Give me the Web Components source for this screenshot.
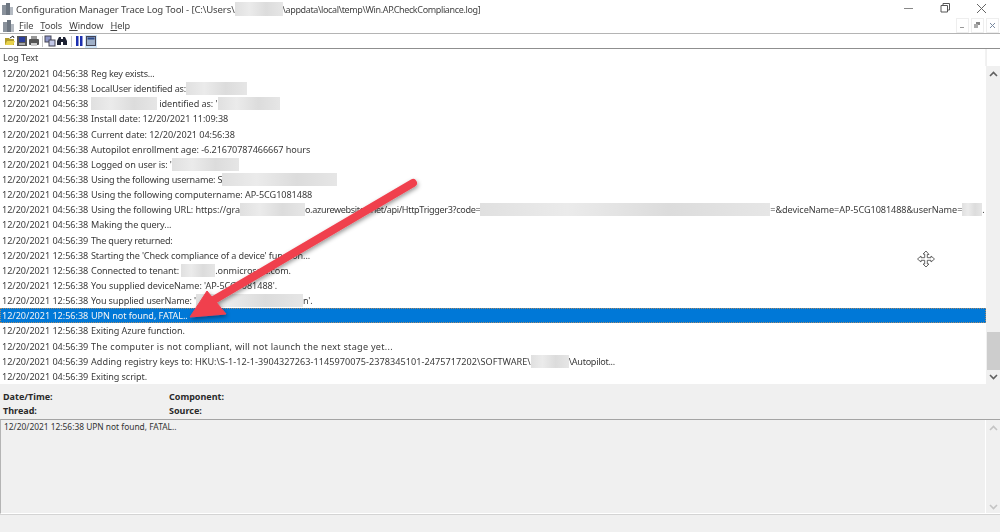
<!DOCTYPE html>
<html>
<head>
<meta charset="utf-8">
<title>Configuration Manager Trace Log Tool</title>
<style>
  html, body { margin: 0; height: 100%; background: #fff; overflow: hidden; }
  body { font-family: "Noto Sans", "Open Sans", sans-serif; color: #333; }
</style>
</head>
<body>
<log-window>
  <title-bar>Configuration Manager Trace Log Tool - [C:\Users\<hidden-text w="48" h="14"></hidden-text><span style="font-size:9px;letter-spacing:-.36px">\appdata\local\temp\Win.AP.CheckCompliance.log]</span></title-bar>
  <menu-bar></menu-bar>
  <tool-bar></tool-bar>
  <log-list>
    <log-row time="12/20/2021 04:56:38" style="--ls:-.2px">Reg key exists...</log-row>
    <log-row time="12/20/2021 04:56:38" style="--ls:-.17px">LocalUser identified as:<hidden-text w="61"></hidden-text></log-row>
    <log-row time="12/20/2021 04:56:38"><hidden-text w="66"></hidden-text> identified as: '<hidden-text w="62"></hidden-text></log-row>
    <log-row time="12/20/2021 04:56:38">Install date: 12/20/2021 11:09:38</log-row>
    <log-row time="12/20/2021 04:56:38">Current date: 12/20/2021 04:56:38</log-row>
    <log-row time="12/20/2021 04:56:38">Autopilot enrollment age: -6.21670787466667 hours</log-row>
    <log-row time="12/20/2021 04:56:38" style="--ls:-.1px">Logged on user is: '<hidden-text w="67"></hidden-text></log-row>
    <log-row time="12/20/2021 04:56:38" style="--ls:-.22px">Using the following username: S<hidden-text w="115"></hidden-text></log-row>
    <log-row time="12/20/2021 04:56:38">Using the following computername: AP-5CG1081488</log-row>
    <log-row time="12/20/2021 04:56:38" style="--ls:-.1px">Using the following URL: https://gra<hidden-text w="65"></hidden-text><span style="letter-spacing:-.34px">o.azurewebsites.net/api/HttpTrigger3?code=</span><hidden-text w="290"></hidden-text><span style="letter-spacing:-.06px">=&amp;deviceName=AP-5CG1081488&amp;userName=</span><hidden-text w="20"></hidden-text>.</log-row>
    <log-row time="12/20/2021 04:56:38" style="--ls:-.1px">Making the query...</log-row>
    <log-row time="12/20/2021 04:56:39" style="--ls:-.2px">The query returned:</log-row>
    <log-row time="12/20/2021 12:56:38" style="--ls:-.14px">Starting the 'Check compliance of a device' function...</log-row>
    <log-row time="12/20/2021 12:56:38" style="--ls:-.1px">Connected to tenant: <hidden-text w="34"></hidden-text>.onmicrosoft.com.</log-row>
    <log-row time="12/20/2021 12:56:38">You supplied deviceName: 'AP-5CG1081488'.</log-row>
    <log-row time="12/20/2021 12:56:38" style="--ls:-.15px">You supplied userName: '<hidden-text w="107"></hidden-text>n'.</log-row>
    <log-row time="12/20/2021 12:56:38" selected>UPN not found, FATAL..</log-row>
    <log-row time="12/20/2021 12:56:38" style="--ls:-.1px">Exiting Azure function.</log-row>
    <log-row time="12/20/2021 04:56:39" style="--ls:.27px">The computer is not compliant, will not launch the next stage yet...</log-row>
    <log-row time="12/20/2021 04:56:39" style="--ls:.05px">Adding registry keys to: HKU:\S-1-12-1-3904327263-1145970075-2378345101-2475717202\SOFTWARE\<hidden-text w="38"></hidden-text><span style="letter-spacing:-.3px">\Autopilot...</span></log-row>
    <log-row time="12/20/2021 04:56:39" style="--ls:-.1px">Exiting script.</log-row>
  </log-list>
  <detail-pane>12/20/2021 12:56:38 UPN not found, FATAL..</detail-pane>
  <callout-arrow></callout-arrow>
</log-window>

<script>
const base = `:host { box-sizing: border-box; } * { box-sizing: border-box; }`;

class LogWindow extends HTMLElement {
  connectedCallback() {
    this.attachShadow({ mode: 'open' });
    this.shadowRoot.innerHTML = `
      <style>
        ${base}
        :host {
          display: flex;
          flex-direction: column;
          position: relative;
          width: 1000px;
          height: 532px;
          overflow: hidden;
          filter: blur(0.42px);
        }
      </style>
      <slot></slot>
    `;
  }
}

class HiddenText extends HTMLElement {
  connectedCallback() {
    const w = this.getAttribute('w');
    const h = this.getAttribute('h') || 13;
    this.attachShadow({ mode: 'open' });
    this.shadowRoot.innerHTML = `
      <style>
        :host {
          display: inline-block;
          width: ${w}px;
          height: ${h}px;
          vertical-align: middle;
          background: linear-gradient(90deg, #e0e0e0, #ebebeb 30%, #dcdcdc 65%, #e6e6e6);
          filter: blur(0.6px);
        }
      </style>
    `;
  }
}

class TitleBar extends HTMLElement {
  connectedCallback() {
    this.attachShadow({ mode: 'open' });
    this.shadowRoot.innerHTML = `
      <style>
        ${base}
        :host {
          display: flex;
          align-items: center;
          height: 18px;
          padding-left: 1px;
          font-size: 9.6px;
          letter-spacing: -0.13px;
          color: #444;
          white-space: nowrap;
        }
        .app { width: 13px; height: 14px; margin-right: 2px; flex: none; }
        .text { flex: 1; display: flex; align-items: center; }
        .text span { display: inline-flex; align-items: center; white-space: pre; }
        .ctl { display: flex; align-items: center; flex: none; }
        .ctl svg { display: block; }
      </style>
      <svg class="app" viewBox="0 0 13 14">
        <rect x="1" y="3" width="4" height="10" fill="#8a929c"/>
        <rect x="5" y="1" width="4" height="12" fill="#6d7681"/>
        <rect x="9" y="5" width="3" height="8" fill="#b4bac2"/>
      </svg>
      <div class="text"><span><slot></slot></span></div>
      <div class="ctl">
        <svg width="100" height="18" viewBox="0 0 100 18" fill="none" stroke="#555" stroke-width="1">
          <path d="M4 8.500h9" stroke="#888"/>
          <path d="M41 5.500h6.500v6.500h-6.500zM43 5.500v-2h6.500v6.500h-2"/>
          <path d="M77 4l9 9M86 4l-9 9" stroke="#666"/>
        </svg>
      </div>
    `;
  }
}

class MenuBar extends HTMLElement {
  connectedCallback() {
    this.attachShadow({ mode: 'open' });
    this.shadowRoot.innerHTML = `
      <style>
        ${base}
        :host {
          display: flex;
          align-items: center;
          height: 16px;
          padding-left: 2px;
          font-size: 9.2px;
          letter-spacing: -0.1px;
          color: #444;
          border-bottom: 1px solid #b4b4b4;
        }
        .app { width: 13px; height: 14px; margin-right: 4px; flex: none; }
        span { margin-right: 7px; }
        u { text-decoration-thickness: 1px; text-underline-offset: 1px; }
        .mdi { margin-left: auto; display: flex; gap: 2px; padding-right: 1px; align-self: flex-start; }
        .mdi div {
          width: 13px;
          height: 15px;
          background: #fff;
          border: 1px solid #eee;
          display: flex;
          align-items: center;
          justify-content: center;
        }
      </style>
      <svg class="app" viewBox="0 0 13 14">
        <rect x="1" y="3" width="4" height="10" fill="#8a929c"/>
        <rect x="5" y="1" width="4" height="12" fill="#6d7681"/>
        <rect x="9" y="5" width="3" height="8" fill="#b4bac2"/>
      </svg>
      <span><u>F</u>ile</span><span><u>T</u>ools</span><span><u>W</u>indow</span><span><u>H</u>elp</span>
      <div class="mdi">
        <div><svg width="7" height="7"><rect x="1" y="5" width="4" height="1" fill="#999"/></svg></div>
        <div><svg width="7" height="7"><rect x="2" y="0" width="4" height="3" fill="#888"/><rect x="0" y="2" width="4" height="4" fill="#aaa"/></svg></div>
        <div><svg width="7" height="7" fill="none" stroke="#7a8aa0"><path d="M1 1l5 5M6 1l-5 5"/></svg></div>
      </div>
    `;
  }
}

class ToolBar extends HTMLElement {
  connectedCallback() {
    this.attachShadow({ mode: 'open' });
    this.shadowRoot.innerHTML = `
      <style>
        ${base}
        :host {
          display: flex;
          align-items: center;
          height: 15px;
          padding-left: 4px;
          border-bottom: 1px solid #8f8f8f;
        }
        svg { display: block; flex: none; width: 12px; height: 12px; }
        .sep { width: 1px; height: 11px; background: #c4c4c4; margin: 0 1px 0 2px; flex: none; }
        .sep.b { margin: 0 1px 0 3px; }
        .on { background: #cfe4f7; width: 12px; height: 13px; display: flex; align-items: center; justify-content: center; }
        .on svg { width: 10px; height: 10px; }
      </style>
      <svg viewBox="0 0 12 12"><path d="M1 3h4l1 1h4v6H1z" fill="#b09a2a"/><path d="M3 6h8l-2 4H1z" fill="#e8d24c"/><path d="M6 3l3-2 1 2" fill="none" stroke="#333"/></svg>
      <svg viewBox="0 0 12 12"><rect x="1" y="1" width="10" height="10" fill="#555"/><rect x="3" y="2" width="6" height="5" fill="#2c3f9c"/><rect x="3" y="8" width="6" height="2" fill="#aaa"/></svg>
      <svg viewBox="0 0 12 12"><rect x="3" y="1" width="6" height="4" fill="#999"/><rect x="1" y="4" width="10" height="6" rx="1" fill="#555"/><rect x="3" y="8" width="6" height="3" fill="#ccc"/></svg>
      <div class="sep"></div>
      <svg viewBox="0 0 12 12"><rect x="1" y="1" width="6" height="6" fill="#8e96c8" stroke="#445"/><rect x="5" y="5" width="6" height="6" fill="#c3c8e8" stroke="#445"/></svg>
      <svg viewBox="0 0 12 12"><path d="M1 10V6l2-4h2v8zM7 10V2h2l2 4v4z" fill="#1d2233"/><rect x="5" y="4" width="2" height="3" fill="#1d2233"/></svg>
      <div class="sep b"></div>
      <svg viewBox="0 0 12 12"><rect x="3" y="1" width="2.500" height="10" fill="#1c2fb0"/><rect x="7" y="1" width="2.500" height="10" fill="#1c2fb0"/></svg>
      <div class="on"><svg viewBox="0 0 10 10"><rect x=".5" y=".5" width="9" height="9" fill="#9fb0c8" stroke="#445"/><rect x="1.500" y="1.500" width="7" height="2" fill="#2c4a8a"/></svg></div>
    `;
  }
}

class LogList extends HTMLElement {
  connectedCallback() {
    this.attachShadow({ mode: 'open' });
    this.shadowRoot.innerHTML = `
      <style>
        ${base}
        :host {
          display: grid;
          grid-template-columns: 986px 14px;
          grid-template-rows: 17px 318px;
          flex: none;
        }
        .head {
          font-size: 9.1px;
          letter-spacing: -0.04px;
          line-height: 17px;
          padding-left: 3px;
          color: #444;
          border-right: 1px solid #f2f2f2;
          grid-column: 1;
        }
        .corner { grid-column: 2; background: #fff; border-left: 1px solid #f0f0f0; }
        .rows { grid-column: 1; overflow: hidden; }
        .bar {
          grid-column: 2;
          background: #f0f0f0;
          display: grid;
          grid-template-rows: 16px 1fr 38px 14px;
        }
        .bar svg { display: block; margin: auto; }
        .thumb { grid-row: 3; background: #cdcdcd; margin-left: 1px; }
        .down { grid-row: 4; }
      </style>
      <div class="head">Log Text</div>
      <div class="corner"></div>
      <div class="rows"><slot></slot></div>
      <div class="bar">
        <svg width="9" height="6" viewBox="0 0 9 6" fill="none" stroke="#606060" stroke-width="1.600"><path d="M1 5l3.500-3.500L8 5"/></svg>
        <div class="thumb"></div>
        <svg class="down" width="9" height="6" viewBox="0 0 9 6" fill="none" stroke="#606060" stroke-width="1.600"><path d="M1 1l3.500 3.500L8 1"/></svg>
      </div>
    `;
  }
}

class LogRow extends HTMLElement {
  connectedCallback() {
    this.attachShadow({ mode: 'open' });
    this.shadowRoot.innerHTML = `
      <style>
        ${base}
        :host {
          display: flex;
          align-items: center;
          height: 15.15px;
          padding-left: 2px;
          font-size: 9.1px;
          color: #3a3a3a;
          white-space: pre;
        }
        :host([selected]) {
          background: #0078d7;
          color: #f4f4f4;
          outline: 1px dotted #a58a6a;
          outline-offset: -1px;
        }
        .time { width: 89px; flex: none; letter-spacing: -0.03px; }
        .msg { display: inline-flex; align-items: center; letter-spacing: var(--ls, -0.06px); }
      </style>
      <span class="time">${this.getAttribute('time')}</span>
      <span class="msg"><slot></slot></span>
    `;
  }
}

class DetailPane extends HTMLElement {
  connectedCallback() {
    this.attachShadow({ mode: 'open' });
    this.shadowRoot.innerHTML = `
      <style>
        ${base}
        :host {
          display: flex;
          flex-direction: column;
          flex: 1;
          background: #f0f0f0;
          font-size: 9px;
          color: #333;
        }
        .info {
          display: grid;
          grid-template-columns: 166px 1fr;
          grid-auto-rows: 14.5px;
          align-items: center;
          padding: 5px 0 0 3px;
          height: 35px;
          font-weight: 700;
          color: #2a2a2a;
        }
        .box {
          display: flex;
          height: 95px;
          border-top: 1px solid #a4a4a4;
          border-left: 1px solid #b4b4b4;
          border-bottom: 1px solid #fff;
          box-shadow: 0 1px 0 #d4d4d4;
        }
        .msg { flex: 1; padding: 1px 0 0 3px; font-size: 8.4px; line-height: 11px; }
        .bar {
          width: 15px;
          border-left: 1px solid #fff;
          display: flex;
          flex-direction: column;
          justify-content: space-between;
          align-items: center;
          padding: 5px 0 3px;
        }
      </style>
      <div class="info">
        <span>Date/Time:</span><span>Component:</span>
        <span>Thread:</span><span>Source:</span>
      </div>
      <div class="box">
        <div class="msg"><slot></slot></div>
        <div class="bar">
          <svg width="9" height="6" viewBox="0 0 9 6" fill="none" stroke="#c4c4c4" stroke-width="1.600"><path d="M1 5l3.500-3.500L8 5"/></svg>
          <svg width="9" height="6" viewBox="0 0 9 6" fill="none" stroke="#c4c4c4" stroke-width="1.600"><path d="M1 1l3.500 3.500L8 1"/></svg>
        </div>
      </div>
    `;
  }
}

// screenshot annotation and the mouse cursor, both lie over the log
class CalloutArrow extends HTMLElement {
  connectedCallback() {
    this.attachShadow({ mode: 'open' });
    this.shadowRoot.innerHTML = `
      <style>
        :host { position: absolute; inset: 0; pointer-events: none; }
        svg { position: absolute; left: 0; top: 0; }
      </style>
      <svg width="1000" height="532" viewBox="0 0 1000 532">
        <defs>
          <filter id="s" x="-20%" y="-20%" width="140%" height="140%">
            <feDropShadow dx="1" dy="2" stdDeviation="2" flood-color="#000" flood-opacity=".4"/>
          </filter>
        </defs>
        <g filter="url(#s)">
          <path d="M413 183L212 301" stroke="#f0404e" stroke-width="8" stroke-linecap="round" fill="none"/>
          <path d="M190 317L207 291L226 314Z" fill="#f0404e" stroke="#f0404e" stroke-width="1" stroke-linejoin="round"/>
        </g>
        <g transform="translate(926 259)" fill="#fff" stroke="#555" stroke-width=".9" stroke-linejoin="round">
          <path d="M0-8l3 3.500H1.300V-1.300H5V-3l3.500 3L5 3V1.300H1.300V5H3L0 8-3 5h1.700V1.300H-5V3l-3.500-3L-5-3v1.700h3.700V-5H-3z"/>
        </g>
      </svg>
    `;
  }
}

customElements.define('log-window', LogWindow);
customElements.define('hidden-text', HiddenText);
customElements.define('title-bar', TitleBar);
customElements.define('menu-bar', MenuBar);
customElements.define('tool-bar', ToolBar);
customElements.define('log-list', LogList);
customElements.define('log-row', LogRow);
customElements.define('detail-pane', DetailPane);
customElements.define('callout-arrow', CalloutArrow);
</script>
</body>
</html>
